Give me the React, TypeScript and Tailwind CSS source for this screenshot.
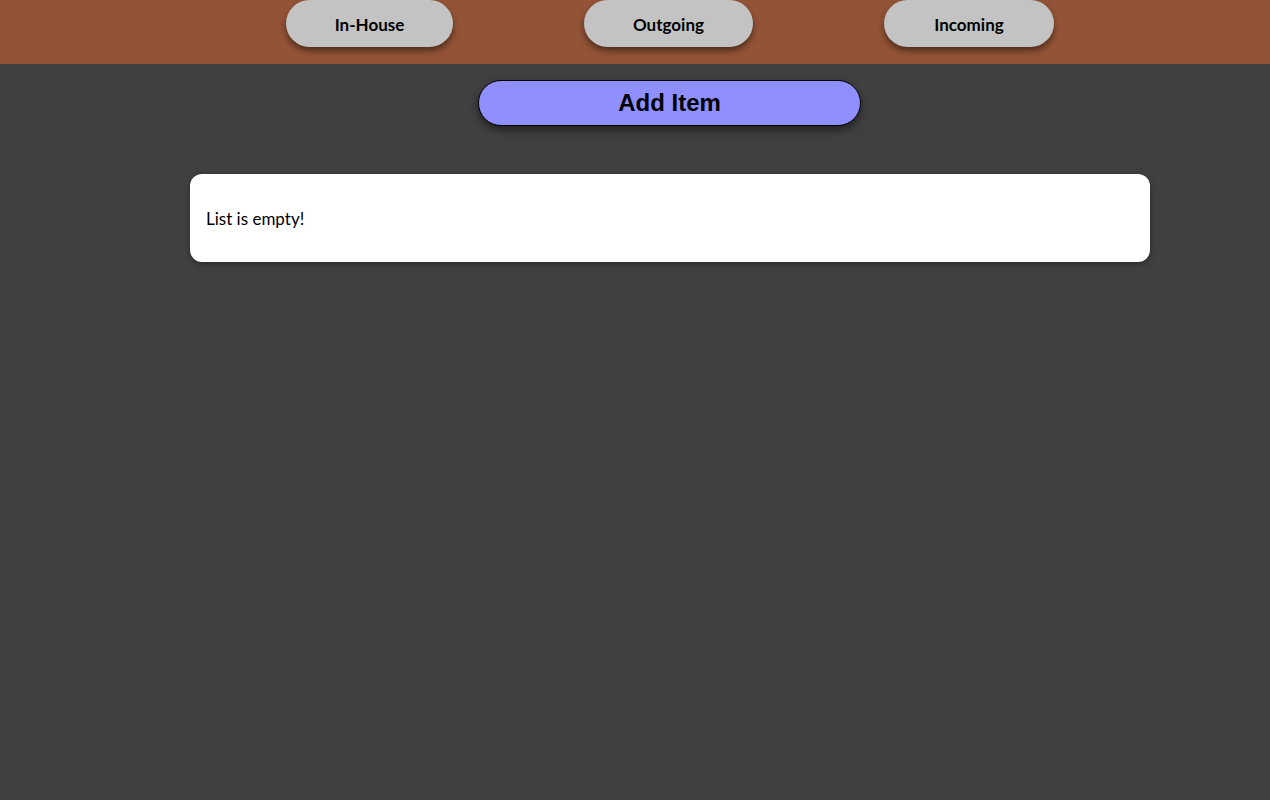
import React from "react";

const tabs = ["In-House", "Outgoing", "Incoming"];

export default function App() {
  return (
    <div className="min-h-screen bg-[#404040] font-['Lato','Noto_Sans',sans-serif]">
      {/* Top nav */}
      <header className="h-16 bg-[#935336] flex justify-center pl-[70px]">
        <nav className="flex items-start gap-[131px]">
          {tabs.map((t, i) => (
            <button
              key={t}
              className={
                "h-[47px] pt-[3px] rounded-full bg-[#c3c3c3] text-[17px] font-bold text-black shadow-[0_4px_6px_rgba(0,0,0,0.45)] " +
                (i === 0 ? "w-[167px]" : i === 1 ? "w-[169px]" : "w-[170px]")
              }
            >
              {t}
            </button>
          ))}
        </nav>
      </header>

      <main className="flex flex-col items-center pl-[69px]">
        <button className="mt-4 h-[46px] w-[383px] rounded-full border border-black bg-[#8f8fff] font-['Liberation_Sans',Arial,sans-serif] text-[24px] font-bold text-black shadow-[0_4px_8px_rgba(0,0,0,0.5)]">
          Add Item
        </button>

        <section className="mt-12 ml-[1px] w-[960px] h-[88px] rounded-xl bg-white px-4 pt-[2px] flex items-center shadow-[0_2px_6px_rgba(0,0,0,0.35)]">
          <p className="text-[17px] text-black">List is empty!</p>
        </section>
      </main>
    </div>
  );
}
